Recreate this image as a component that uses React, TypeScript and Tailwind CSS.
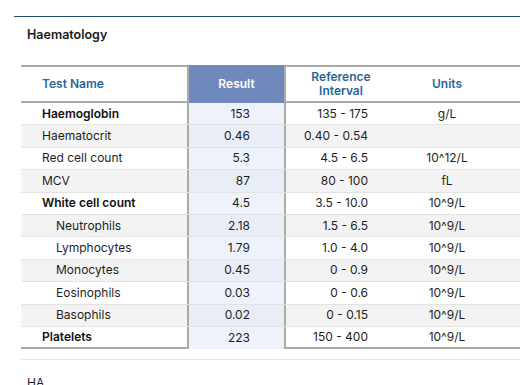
const rows = [
  { name: "Haemoglobin", result: "153", ref: "135 - 175", units: "g/L", bold: true },
  { name: "Haematocrit", result: "0.46", ref: "0.40 - 0.54", units: "" },
  { name: "Red cell count", result: "5.3", ref: "4.5 - 6.5", units: "10^12/L" },
  { name: "MCV", result: "87", ref: "80 - 100", units: "fL" },
  { name: "White cell count", result: "4.5", ref: "3.5 - 10.0", units: "10^9/L", bold: true },
  { name: "Neutrophils", result: "2.18", ref: "1.5 - 6.5", units: "10^9/L", indent: true },
  { name: "Lymphocytes", result: "1.79", ref: "1.0 - 4.0", units: "10^9/L", indent: true },
  { name: "Monocytes", result: "0.45", ref: "0 - 0.9", units: "10^9/L", indent: true },
  { name: "Eosinophils", result: "0.03", ref: "0 - 0.6", units: "10^9/L", indent: true },
  { name: "Basophils", result: "0.02", ref: "0 - 0.15", units: "10^9/L", indent: true },
  { name: "Platelets", result: "223", ref: "150 - 400", units: "10^9/L", bold: true },
];

export default function App() {
  return (
    <main
      className="w-[520px] h-[385px] overflow-hidden bg-white text-[#1e1e1e]"
      style={{ fontFamily: "Inter, 'Liberation Sans', sans-serif" }}
    >
      <div className="pt-[16px] pl-[14px]">
        <div className="border-t border-[#1f4e6b]" />
        <h2 className="mt-[10px] pl-[13px] text-[12.5px] font-semibold leading-[16px] text-[#1a1a1a]">
          Haematology
        </h2>

        <div className="mt-[22px] ml-[7px] text-[12px]">
          {/* header */}
          <div className="grid grid-cols-[166px_99px_110px_1fr] h-[38px] border-y-2 border-[#aaaaaa] font-semibold text-[#2b6599]">
            <div className="flex items-center pl-[21px]">Test Name</div>
            <div className="flex items-center justify-center border-x-2 border-[#aaaaaa] bg-[#6f89bd] text-white -my-[2px]">
              Result
            </div>
            <div className="flex flex-col items-center justify-center text-center leading-[14px]">
              <span>Reference</span>
              <span>Interval</span>
            </div>
            <div className="flex items-center justify-center pr-[22px]">Units</div>
          </div>

          {/* body */}
          {rows.map((r, i) => {
            const odd = i % 2 === 1;
            const last = i === rows.length - 1;
            return (
              <div
                key={r.name}
                className={`grid grid-cols-[166px_99px_110px_1fr] h-[22.4px] ${
                  last ? "border-b-2 border-[#aaaaaa]" : "border-b border-[#e3e3e3]"
                } ${odd ? "bg-[#f3f3f3]" : "bg-white"}`}
              >
                <div
                  className={`flex items-center ${r.indent ? "pl-[35px]" : "pl-[21px]"} ${
                    r.bold ? "font-semibold text-[#111]" : ""
                  }`}
                >
                  {r.name}
                </div>
                <div
                  className={`flex items-center justify-end pr-[34px] border-x-2 border-[#aaaaaa] ${
                    odd ? "bg-[#e8edf6]" : "bg-[#eef2fa]"
                  } ${last ? "-mb-[2px]" : ""}`}
                >
                  {r.result}
                </div>
                <div className="flex items-center justify-end pr-[28px]">{r.ref}</div>
                <div className="flex items-center justify-center pr-[22px]">{r.units}</div>
              </div>
            );
          })}

          <div className="mt-[10px] border-t border-[#e5e5e5]" />
          <div className="mt-[15px] pl-[6px] text-[12px] leading-[16px]">HA</div>
        </div>
      </div>
    </main>
  );
}
